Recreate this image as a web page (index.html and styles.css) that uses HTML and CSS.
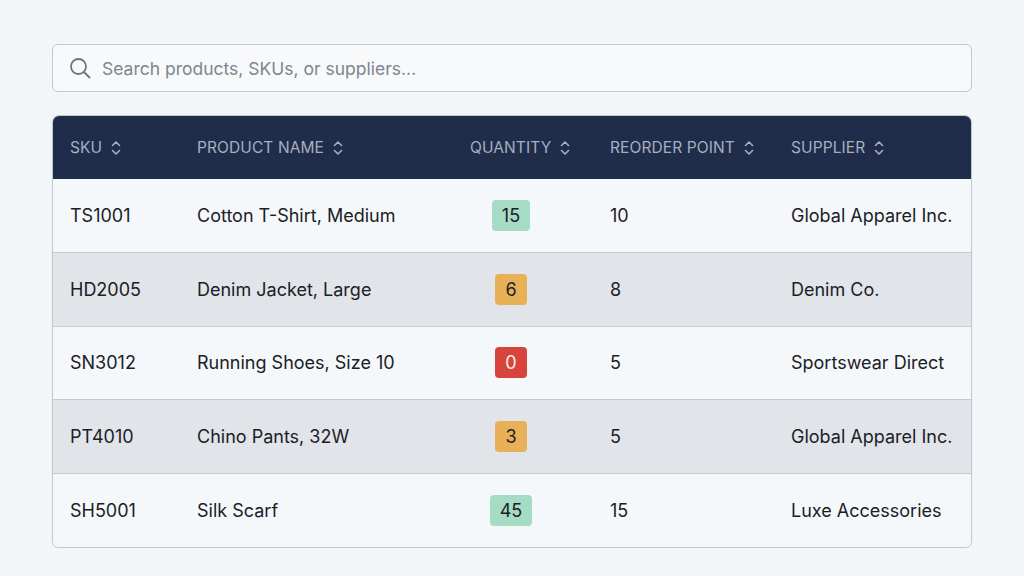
FILE: index.html
```html
<!DOCTYPE html>
<html lang="en">
<head>
<meta charset="utf-8">
<title>Inventory</title>
<link rel="stylesheet" href="styles.css">
</head>
<body>
<main class="page">
  <label class="search">
    <svg class="search-icon" width="24" height="24" viewBox="0 0 24 24" fill="none" stroke="currentColor" stroke-width="1.8" stroke-linecap="round" stroke-linejoin="round"><circle cx="10.5" cy="10.5" r="7.5"/><path d="M16 16l5.5 5.5"/></svg>
    <input class="search-input" type="text" placeholder="Search products, SKUs, or suppliers...">
  </label>

  <div class="table-wrap">
    <table class="table">
      <colgroup>
        <col class="c-sku"><col class="c-name"><col class="c-qty"><col class="c-reorder"><col class="c-supplier">
      </colgroup>
      <thead>
        <tr>
          <th><span class="th">SKU <svg class="sort" viewBox="0 0 10 16" fill="none" stroke="currentColor" stroke-width="1.6" stroke-linecap="round" stroke-linejoin="round"><path d="M1.5 5.5L5 2l3.5 3.5M1.5 10.5L5 14l3.5-3.5"/></svg></span></th>
          <th><span class="th">PRODUCT NAME <svg class="sort" viewBox="0 0 10 16" fill="none" stroke="currentColor" stroke-width="1.6" stroke-linecap="round" stroke-linejoin="round"><path d="M1.5 5.5L5 2l3.5 3.5M1.5 10.5L5 14l3.5-3.5"/></svg></span></th>
          <th class="qty-h"><span class="th">QUANTITY <svg class="sort" viewBox="0 0 10 16" fill="none" stroke="currentColor" stroke-width="1.6" stroke-linecap="round" stroke-linejoin="round"><path d="M1.5 5.5L5 2l3.5 3.5M1.5 10.5L5 14l3.5-3.5"/></svg></span></th>
          <th><span class="th">REORDER POINT <svg class="sort" viewBox="0 0 10 16" fill="none" stroke="currentColor" stroke-width="1.6" stroke-linecap="round" stroke-linejoin="round"><path d="M1.5 5.5L5 2l3.5 3.5M1.5 10.5L5 14l3.5-3.5"/></svg></span></th>
          <th><span class="th">SUPPLIER <svg class="sort" viewBox="0 0 10 16" fill="none" stroke="currentColor" stroke-width="1.6" stroke-linecap="round" stroke-linejoin="round"><path d="M1.5 5.5L5 2l3.5 3.5M1.5 10.5L5 14l3.5-3.5"/></svg></span></th>
        </tr>
      </thead>
      <tbody>
        <tr>
          <td>TS1001</td><td>Cotton T-Shirt, Medium</td>
          <td class="qty"><span class="badge ok">15</span></td>
          <td>10</td><td>Global Apparel Inc.</td>
        </tr>
        <tr>
          <td>HD2005</td><td>Denim Jacket, Large</td>
          <td class="qty"><span class="badge low">6</span></td>
          <td>8</td><td>Denim Co.</td>
        </tr>
        <tr>
          <td>SN3012</td><td>Running Shoes, Size 10</td>
          <td class="qty"><span class="badge out">0</span></td>
          <td>5</td><td>Sportswear Direct</td>
        </tr>
        <tr>
          <td>PT4010</td><td>Chino Pants, 32W</td>
          <td class="qty"><span class="badge low">3</span></td>
          <td>5</td><td>Global Apparel Inc.</td>
        </tr>
        <tr>
          <td>SH5001</td><td>Silk Scarf</td>
          <td class="qty"><span class="badge ok">45</span></td>
          <td>15</td><td>Luxe Accessories</td>
        </tr>
      </tbody>
    </table>
  </div>
</main>
</body>
</html>
```

FILE: styles.css
```css
* { box-sizing: border-box; }

html, body {
  margin: 0;
  padding: 0;
  background: #f3f6f9;
}

body {
  font-family: Inter, "Noto Sans", "Liberation Sans", sans-serif;
  color: #1c2026;
}

.page {
  width: 920px;
  margin: 0 auto;
  padding-top: 44px;
}

.search {
  display: flex;
  align-items: center;
  gap: 10px;
  height: 48px;
  padding: 0 15px;
  background: #f7f9fb;
  border: 1px solid #c3c8cf;
  border-radius: 6px;
}

.search-icon {
  color: #6f757e;
  flex: none;
}

.search-input {
  flex: 1;
  border: 0;
  outline: 0;
  background: transparent;
  font-family: inherit;
  font-size: 17.5px;
  color: #1c2026;
  padding: 0;
}

.search-input::placeholder {
  color: #80858e;
}

.table-wrap {
  margin-top: 23px;
  border: 1px solid #c3c8cf;
  border-radius: 7px;
  overflow: hidden;
  box-shadow: 0 1px 2px rgba(0, 0, 0, 0.06);
}

.table {
  width: 100%;
  border-collapse: collapse;
  table-layout: fixed;
  font-size: 18px;
}

.c-sku { width: 127px; }
.c-name { width: 273px; }
.c-qty { width: 140px; }
.c-reorder { width: 181px; }
.c-supplier { width: 197px; }

thead tr {
  background: #1f2d4b;
  height: 63px;
}

th {
  text-align: left;
  font-weight: 400;
  font-size: 15.5px;
  color: #a5afc0;
  padding: 0 0 0 17px;
  letter-spacing: 0.1px;
}

.th {
  display: inline-flex;
  align-items: center;
  gap: 9px;
  white-space: nowrap;
}

.sort {
  width: 10px;
  height: 16px;
}

td {
  padding: 0 0 0 17px;
  height: 73.6px;
  white-space: nowrap;
  line-height: 27px;
}

tbody tr {
  background: #f5f8fb;
  border-top: 1px solid #c5cad2;
}

tbody tr:first-child {
  border-top: 0;
}

tbody tr:nth-child(even) {
  background: #e1e4e9;
}

td.qty {
  text-align: center;
  padding: 0 41px 0 17px;
}

.badge {
  display: inline-block;
  padding: 2px 10px;
  border-radius: 4px;
  line-height: 27px;
  color: #1c2026;
}

.badge.ok { background: #a6dcc6; }
.badge.low { background: #e8b158; }
.badge.out { background: #d7443b; color: #fbeeee; }
```
